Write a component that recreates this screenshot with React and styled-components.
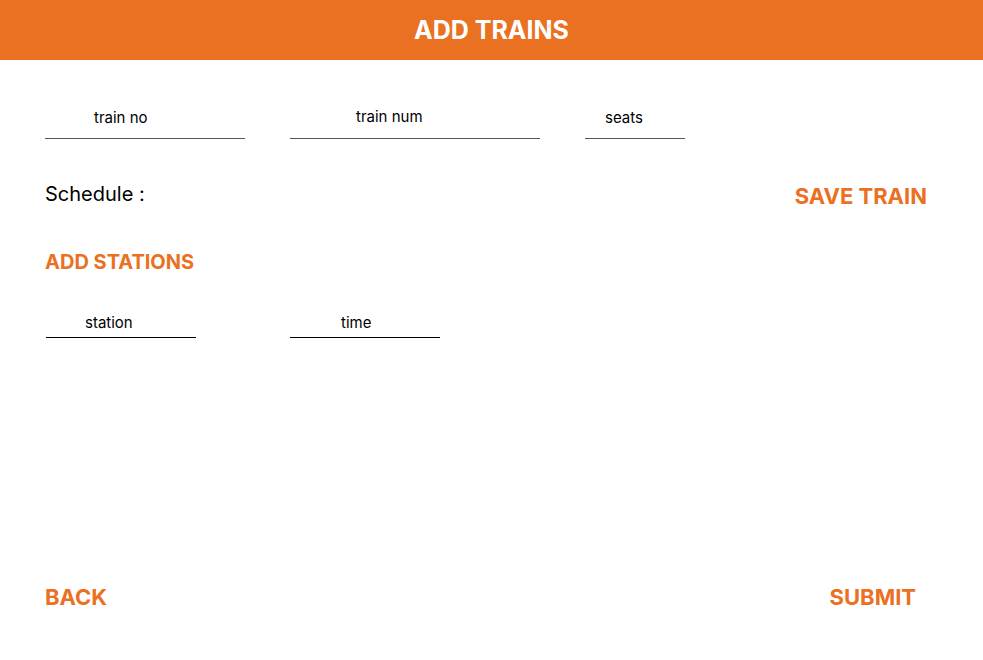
import React from 'react';
import styled, { createGlobalStyle } from 'styled-components';

const ORANGE = '#EA7022';

const GlobalStyle = createGlobalStyle`
  html, body {
    margin: 0;
    padding: 0;
    background: #fff;
  }
  body {
    font-family: Inter, "Noto Sans", "Liberation Sans", sans-serif;
  }
`;

const Page = styled.div`
  min-height: 100vh;
  display: flex;
  flex-direction: column;
`;

const Header = styled.header`
  height: 60px;
  background: ${ORANGE};
  display: flex;
  align-items: center;
  justify-content: center;
`;

const Title = styled.h1`
  margin: 0;
  color: #fff;
  font-size: 25px;
  font-weight: 700;
  line-height: 30px;
`;

const Row = styled.div`
  display: flex;
  align-items: ${p => p.align || 'flex-start'};
  gap: ${p => p.gap || 45}px;
  padding: 0 45px;
  margin-top: ${p => p.top || 0}px;
`;

const Field = styled.div`
  width: ${p => p.width}px;
  box-sizing: border-box;
  padding: 0 0 ${p => p.pb}px ${p => p.indent}px;
  border-bottom: 1px solid ${p => p.dark ? '#000' : '#555'};
  margin-left: ${p => p.offset || 0}px;
  font-size: 15px;
  line-height: 18px;
  color: #000;
`;

const Label = styled.div`
  font-size: 20px;
  line-height: 24px;
  color: #000;
`;

const Action = styled.button`
  background: none;
  border: 0;
  padding: 0;
  margin: ${p => p.drop || 0}px ${p => p.right || 0}px 0 0;
  color: ${ORANGE};
  font-family: inherit;
  font-size: ${p => p.size || 22}px;
  font-weight: 700;
  line-height: ${p => (p.size || 22) + 5}px;
  cursor: pointer;
`;

const SpaceRow = styled(Row)`
  justify-content: space-between;
`;

const Footer = styled(SpaceRow)`
  margin-top: auto;
  padding-bottom: 49px;
`;

const App = () => {
  return (
    <Page>
      <GlobalStyle />
      <Header>
        <Title>ADD TRAINS</Title>
      </Header>

      <Row top={48} align="flex-end">
        <Field width={200} indent={49} pb={11}>train no</Field>
        <Field width={250} indent={66} pb={12}>train num</Field>
        <Field width={100} indent={20} pb={11}>seats</Field>
      </Row>

      <SpaceRow top={43}>
        <Label>Schedule :</Label>
        <Action drop={1} right={11}>SAVE TRAIN</Action>
      </SpaceRow>

      <Row top={40}>
        <Action size={20}>ADD STATIONS</Action>
      </Row>

      <Row top={39} gap={94} align="flex-end">
        <Field width={150} indent={39} offset={1} pb={5} dark>station</Field>
        <Field width={150} indent={51} pb={5} dark>time</Field>
      </Row>

      <Footer>
        <Action>BACK</Action>
        <Action right={22}>SUBMIT</Action>
      </Footer>
    </Page>
  );
};

export default App;
